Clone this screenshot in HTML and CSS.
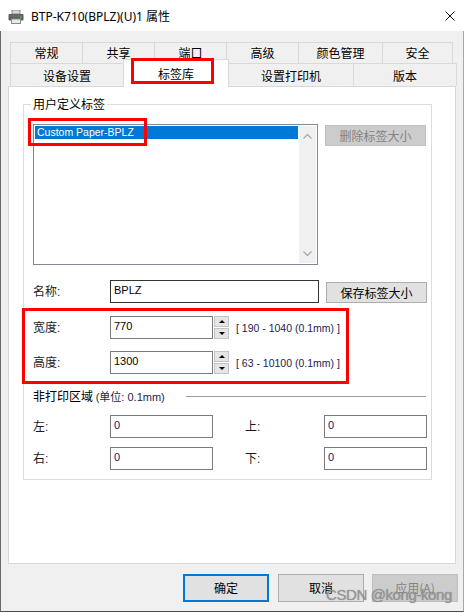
FILE: index.html
```html
<!DOCTYPE html>
<html lang="zh-CN">
<head>
  <meta charset="UTF-8">
  <title>BTP-K710(BPLZ)(U)1 属性</title>
  <link rel="stylesheet" href="styles.css">
</head>
<body>
  <div class="window">
    <!-- 标题栏 -->
    <div class="titlebar">
      <svg class="app-icon" width="16" height="14" viewBox="0 0 16 14">
        <rect x="4" y="0" width="8" height="4" fill="#d8d8d8" stroke="#8a8a8a" stroke-width="1"/>
        <rect x="0.5" y="4" width="15" height="6.5" rx="1" fill="#5c5c5c"/>
        <rect x="2" y="5.5" width="12" height="1" fill="#7a7a7a"/>
        <rect x="3.5" y="9" width="9" height="4.5" fill="#e8e8e8" stroke="#8a8a8a" stroke-width="1"/>
        <rect x="12" y="6.5" width="2" height="1.2" fill="#4fc34f"/>
      </svg>
      <span class="title">BTP-K710(BPLZ)(U)1 属性</span>
      <svg class="close" width="10" height="10" viewBox="0 0 10 10">
        <path d="M0.5 0.5 L9.5 9.5 M9.5 0.5 L0.5 9.5" stroke="#111" stroke-width="1"/>
      </svg>
    </div>

    <div class="dialog">
      <!-- 选项卡 -->
      <div class="tabs">
        <div class="tab-row">
          <div class="tab" style="width:72px">常规</div>
          <div class="tab" style="width:72px">共享</div>
          <div class="tab" style="width:72px">端口</div>
          <div class="tab" style="width:72px">高级</div>
          <div class="tab" style="width:84px">颜色管理</div>
          <div class="tab last" style="width:71px">安全</div>
        </div>
        <div class="tab-row lower">
          <div class="tab" style="width:113px">设备设置</div>
          <div class="tab active" style="width:106px">标签库</div>
          <div class="tab after-active" style="width:125px">设置打印机</div>
          <div class="tab last" style="width:104px">版本</div>
        </div>
      </div>

      <div class="panel">
        <div class="group">
          <div class="group-title">用户定义标签</div>

          <div class="list-row">
            <div class="listbox">
              <div class="list-items">
                <div class="item selected">Custom Paper-BPLZ</div>
              </div>
              <div class="scrollbar">
                <svg width="9" height="5" viewBox="0 0 9 5"><path d="M0.5 4.5 L4.5 0.5 L8.5 4.5" fill="none" stroke="#a6a6a6" stroke-width="1.2"/></svg>
                <svg width="9" height="5" viewBox="0 0 9 5"><path d="M0.5 0.5 L4.5 4.5 L8.5 0.5" fill="none" stroke="#a6a6a6" stroke-width="1.2"/></svg>
              </div>
            </div>
            <button class="btn side disabled">删除标签大小</button>
          </div>

          <div class="field-row name-row">
            <span class="label">名称:</span>
            <div class="input long focused">BPLZ</div>
            <button class="btn side">保存标签大小</button>
          </div>

          <div class="field-row width-row">
            <span class="label">宽度:</span>
            <div class="input short">770</div>
            <div class="spin">
              <div class="spin-btn"><span class="arrow up"></span></div>
              <div class="spin-btn"><span class="arrow down"></span></div>
            </div>
            <span class="range">[ 190 - 1040 (0.1mm) ]</span>
          </div>

          <div class="field-row height-row">
            <span class="label">高度:</span>
            <div class="input short">1300</div>
            <div class="spin">
              <div class="spin-btn"><span class="arrow up"></span></div>
              <div class="spin-btn"><span class="arrow down"></span></div>
            </div>
            <span class="range">[ 63 - 10100 (0.1mm) ]</span>
          </div>

          <div class="section-head">
            <span>非打印区域 <span class="unit">(单位: 0.1mm)</span></span>
            <div class="rule"></div>
          </div>

          <div class="field-row margin-row first">
            <span class="label">左<i>:</i></span>
            <div class="input short">0</div>
            <span class="label second">上<i>:</i></span>
            <div class="input short">0</div>
          </div>
          <div class="field-row margin-row">
            <span class="label">右<i>:</i></span>
            <div class="input short">0</div>
            <span class="label second">下<i>:</i></span>
            <div class="input short">0</div>
          </div>
        </div>
      </div>

      <!-- 底部按钮 -->
      <div class="buttons">
        <button class="btn dlg default">确定</button>
        <button class="btn dlg">取消</button>
        <button class="btn dlg disabled">应用(A)</button>
      </div>
    </div>

    <!-- 红框标注 -->
    <div class="mark mark-tab"></div>
    <div class="mark mark-item"></div>
    <div class="mark mark-size"></div>

    <div class="watermark">CSDN @kong-kong</div>
  </div>
</body>
</html>
```

FILE: styles.css
```css
/* 全体 */
body {
  margin: 0;
  background: #fff;
  font-family: "Liberation Sans", "Noto Sans CJK SC", sans-serif;
  font-size: 12px;
  color: #000;
}

.window {
  position: relative;
  width: 465px;
  height: 613px;
  overflow: hidden;
}

/* 标题栏 */
.titlebar {
  height: 31px;
  display: flex;
  align-items: center;
  background: #fff;
  padding-left: 8px;
  box-sizing: border-box;
}

.app-icon {
  margin-right: 7px;
  margin-top: 2px;
}

.title {
  font-family: "Noto Sans", "Noto Sans CJK SC", sans-serif;
  font-size: 12px;
  flex: 1;
}

.close {
  margin-right: 10px;
}

/* 对话框主体 */
.dialog {
  width: 464px;
  height: 581px;
  box-sizing: border-box;
  background: #f0f0f0;
  border-left: 1px solid #6a6a6a;
  border-right: 1px solid #a8a8a8;
  border-bottom: 1px solid #4a4a4a;
  padding: 11px 5px 0 7px;
}

/* 选项卡 */
.tabs {
  margin-left: 2px;
}

.tab-row {
  display: flex;
  align-items: flex-start;
}

.tab {
  box-sizing: border-box;
  height: 21px;
  border-top: 1px solid #d9d9d9;
  border-left: 1px solid #d9d9d9;
  background: #f0f0f0;
  display: flex;
  align-items: center;
  justify-content: center;
  font-family: "Noto Sans CJK SC", sans-serif;
  line-height: 14px;
}

.tab.last {
  border-right: 1px solid #d9d9d9;
}

.tab-row.lower .tab {
  height: 23px;
  padding-top: 1px;
}

.tab-row.lower .tab.active {
  height: 28px;
  margin-top: -4px;
  margin-bottom: -1px;
  background: #fff;
  border-right: 1px solid #d9d9d9;
  position: relative;
  z-index: 1;
  padding-top: 0;
}

.tab.after-active {
  margin-left: -1px;
}

/* 面板 */
.panel {
  width: 448px;
  height: 478px;
  box-sizing: border-box;
  background: #fff;
  border: 1px solid #d9d9d9;
  padding-top: 17px;
}

.group {
  margin-left: 14px;
  width: 409px;
  box-sizing: border-box;
  border: 1px solid #dcdcdc;
  padding: 0 0 9px 9px;
}

.group-title {
  width: max-content;
  margin-top: -8px;
  margin-left: -2px;
  padding: 0 2px;
  background: #fff;
  line-height: 14px;
  height: 14px;
  font-family: "Noto Sans CJK SC", sans-serif;
}

/* 列表 */
.list-row {
  display: flex;
  align-items: flex-start;
  margin-top: 13px;
}

.listbox {
  width: 285px;
  height: 141px;
  box-sizing: border-box;
  border: 1px solid #828790;
  padding: 1px;
  display: flex;
}

.list-items {
  flex: 1;
}

.item {
  height: 13px;
  line-height: 13px;
  font-size: 10.5px;
  padding-left: 2px;
}

.item.selected {
  background: #0078d7;
  color: #fff;
}

.scrollbar {
  width: 17px;
  margin-left: 1px;
  background: #f0f0f0;
  display: flex;
  flex-direction: column;
  justify-content: space-between;
  align-items: center;
  padding: 8px 0 7px;
  box-sizing: border-box;
}

/* 按钮 */
.btn {
  box-sizing: border-box;
  background: #e1e1e1;
  border: 1px solid #adadad;
  font-family: "Noto Sans CJK SC", sans-serif;
  font-size: 12px;
  color: #000;
  padding: 0;
  margin: 0;
  line-height: 14px;
}

.btn.disabled {
  background: #cccccc;
  border-color: #bfbfbf;
  color: #838383;
}

.btn.side {
  width: 101px;
  height: 21px;
  margin-left: 7px;
  margin-top: 1px;
}

/* 输入行 */
.field-row {
  display: flex;
  align-items: center;
  height: 23px;
}

.name-row {
  margin-top: 15px;
  align-items: flex-start;
}

.name-row .label {
  align-self: center;
}

.name-row .btn.side {
  margin-top: 2px;
}

.width-row {
  margin-top: 13px;
}

.height-row {
  margin-top: 12px;
}

.label {
  width: 77px;
  line-height: 14px;
  font-family: "Liberation Sans", "Noto Sans CJK SC", sans-serif;
  color: #1a1a1a;
}

.label i {
  font-style: normal;
  color: #3a2a5a;
}

.label.second {
  width: 79px;
  margin-left: 32px;
}

.input {
  height: 23px;
  box-sizing: border-box;
  border: 1px solid #7a7a7a;
  background: #fff;
  padding: 2px 3px;
  line-height: 14px;
  font-size: 11px;
  align-self: flex-start;
}

.input.long {
  width: 209px;
}

.input.short {
  width: 103px;
}

.input.focused {
  border-color: #333;
}

.margin-row .input {
  color: #0a1a6a;
}

/* 微调按钮 */
.spin {
  width: 15px;
  height: 23px;
  margin-left: 1px;
  display: flex;
  flex-direction: column;
  gap: 1px;
  align-self: flex-start;
}

.spin-btn {
  flex: 1;
  background: #e5e5e5;
  border: 1px solid #c4c4c4;
  display: flex;
  align-items: center;
  justify-content: center;
}

.arrow {
  width: 0;
  height: 0;
  border-left: 3px solid transparent;
  border-right: 3px solid transparent;
}

.arrow.up {
  border-bottom: 3px solid #000;
}

.arrow.down {
  border-top: 3px solid #000;
}

.range {
  margin-left: 7px;
  font-size: 10.5px;
  color: #1c2450;
}

/* 非打印区域 */
.section-head {
  margin-top: 15px;
  height: 14px;
  line-height: 14px;
  display: flex;
  align-items: center;
  justify-content: space-between;
  padding-right: 5px;
  font-family: "Noto Sans CJK SC", sans-serif;
}

.unit {
  font-family: "Liberation Sans", "Noto Sans CJK SC", sans-serif;
  font-size: 11px;
  color: #1c2450;
}

.rule {
  width: 240px;
  height: 1px;
  background: #a0a0a0;
}

.margin-row {
  margin-top: 9px;
}

.margin-row.first {
  margin-top: 12px;
}

/* 底部按钮 */
.buttons {
  display: flex;
  justify-content: flex-end;
  gap: 9px;
  margin-top: 10px;
}

.btn.dlg {
  width: 86px;
  height: 28px;
}

.btn.dlg.disabled {
  margin-left: -1px;
}

.btn.default {
  border: 2px solid #0078d7;
}

/* 红框 */
.mark {
  position: absolute;
  border: 3px solid #ff0000;
  box-sizing: border-box;
  z-index: 5;
}

.mark-tab {
  left: 131px;
  top: 58px;
  width: 83px;
  height: 26px;
}

.mark-item {
  left: 28px;
  top: 118px;
  width: 119px;
  height: 28px;
}

.mark-size {
  left: 22px;
  top: 308px;
  width: 327px;
  height: 76px;
}

/* 水印 */
.watermark {
  position: absolute;
  left: 326px;
  top: 586px;
  font-family: "Liberation Sans", sans-serif;
  font-size: 15px;
  letter-spacing: -0.4px;
  color: rgba(150, 150, 150, 0.85);
  text-shadow: 0 0 1px rgba(80, 80, 80, 0.6);
  z-index: 6;
}
```
